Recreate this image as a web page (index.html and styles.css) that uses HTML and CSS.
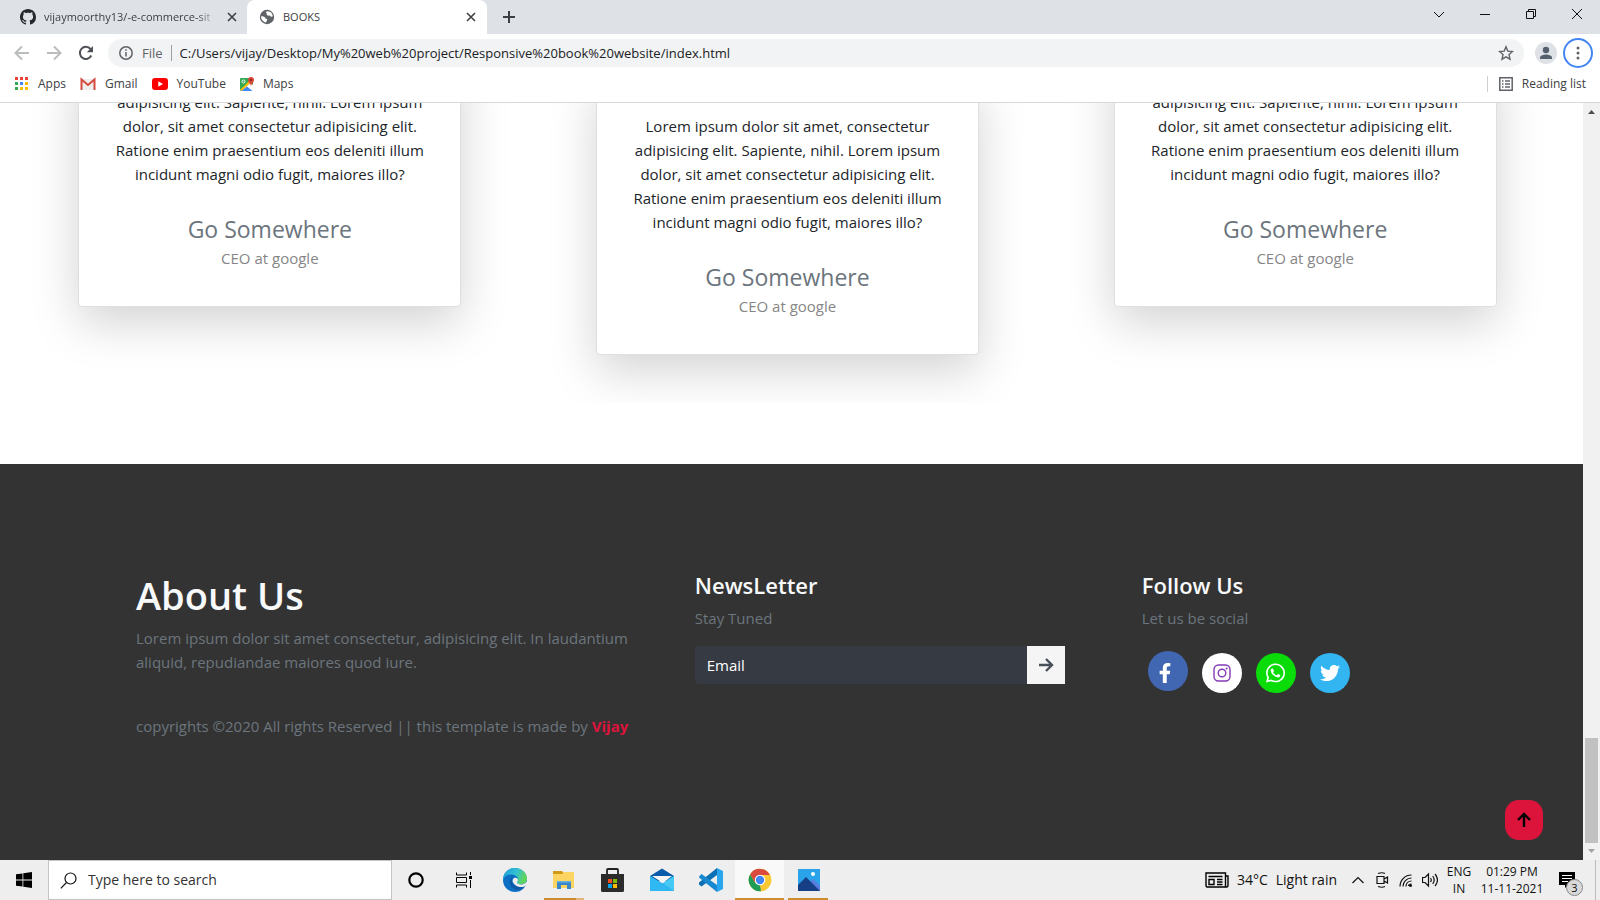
FILE: index.html
```html
<!DOCTYPE html>
<html lang="en">
<head>
<meta charset="utf-8">
<title>BOOKS</title>
<link rel="stylesheet" href="styles.css">
</head>
<body>
<div class="desktop">
  <header class="browser">
    <div class="tabstrip">
      <div class="tab">
        <svg class="favicon" viewBox="0 0 16 16"><path fill="#24292e" d="M8 0C3.58 0 0 3.58 0 8c0 3.54 2.29 6.53 5.47 7.59.4.07.55-.17.55-.38 0-.19-.01-.82-.01-1.49-2.01.37-2.53-.49-2.69-.94-.09-.23-.48-.94-.82-1.13-.28-.15-.68-.52-.01-.53.63-.01 1.08.58 1.23.82.72 1.21 1.87.87 2.33.66.07-.52.28-.87.51-1.07-1.78-.2-3.64-.89-3.64-3.95 0-.87.31-1.59.82-2.15-.08-.2-.36-1.02.08-2.12 0 0 .67-.21 2.2.82.64-.18 1.32-.27 2-.27.68 0 1.36.09 2 .27 1.53-1.04 2.2-.82 2.2-.82.44 1.1.16 1.92.08 2.12.51.56.82 1.27.82 2.15 0 3.07-1.87 3.75-3.65 3.95.29.25.54.73.54 1.48 0 1.07-.01 1.93-.01 2.2 0 .21.15.46.55.38A8.013 8.013 0 0 0 16 8c0-4.42-3.58-8-8-8z"/></svg>
        <span class="tab-title tab-title-fade">vijaymoorthy13/-e-commerce-sit</span>
        <button class="tab-close" aria-label="Close tab"><svg viewBox="0 0 10 10"><path d="M1 1l8 8M9 1l-8 8"/></svg></button>
      </div>
      <div class="tab tab-active">
        <svg class="favicon" viewBox="0 0 16 16"><circle cx="8" cy="8" r="7.200" fill="#5f6368"/><path fill="#fff" d="M8.500 2.200c-1.500.3-1.700 1.300-1 2 .8.600-.2 1.200.6 2 .8.500 2.300-.2 2.900.7.400.7 1.400.9 2.700.7.200-2.700-1.800-5.300-5.200-5.400zM2.100 7.300c1.300.2 2.900.1 3.700.9.700.700.6 1.500 1.600 1.600 1 .2 1 .8.500 1.500-.4.700-.3 1.600-.9 2.300C4.100 13 1.900 10.300 2.100 7.300z"/></svg>
        <span class="tab-title">BOOKS</span>
        <button class="tab-close" aria-label="Close tab"><svg viewBox="0 0 10 10"><path d="M1 1l8 8M9 1l-8 8"/></svg></button>
      </div>
      <button class="new-tab" aria-label="New tab"><svg viewBox="0 0 14 14"><path d="M7 1v12M1 7h12"/></svg></button>
      <div class="captions">
        <button aria-label="Search tabs"><svg viewBox="0 0 12 12"><path d="M1 4l5 5 5-5"/></svg></button>
        <button aria-label="Minimize"><svg viewBox="0 0 12 12"><path d="M1 6.500h10"/></svg></button>
        <button aria-label="Restore"><svg viewBox="0 0 12 12"><path d="M1.500 3.500h7v7h-7zM3.500 3.500v-2h7v7h-2"/></svg></button>
        <button aria-label="Close"><svg viewBox="0 0 12 12"><path d="M1 1l10 10M11 1L1 11"/></svg></button>
      </div>
    </div>
    <div class="toolbar">
      <button class="nav" aria-label="Back"><svg class="dim" viewBox="0 0 16 16"><path d="M15 8H2M8 1.500L1.500 8 8 14.500"/></svg></button>
      <button class="nav" aria-label="Forward"><svg class="dim" viewBox="0 0 16 16"><path d="M1 8h13M8 1.500L14.500 8 8 14.500"/></svg></button>
      <button class="nav" aria-label="Reload"><svg viewBox="0 0 16 16"><path d="M13.300 10.500A6 6 0 1 1 12.500 4l1.500 2"/><path class="solid" d="M15 1v6.200H8.800z"/></svg></button>
      <div class="omnibox">
        <svg class="info" viewBox="0 0 14 14"><circle cx="7" cy="7" r="6.200"/><path d="M7 6v4.500M7 3.300v1.500"/></svg>
        <span class="scheme">File</span>
        <input class="url" aria-label="Address" value="C:/Users/vijay/Desktop/My%20web%20project/Responsive%20book%20website/index.html">
        <button class="star" aria-label="Bookmark"><svg viewBox="0 0 16 16"><path d="M8 1.800l1.800 4.300 4.700.4-3.500 3.100 1 4.600L8 11.800l-4 2.400 1-4.600L1.500 6.500l4.700-.4z"/></svg></button>
      </div>
      <button class="avatar" aria-label="Profile"><svg viewBox="0 0 22 22"><circle cx="11" cy="8" r="3.200"/><path d="M5 17v-1.500c0-2 4-3 6-3s6 1 6 3V17z"/></svg></button>
      <button class="menu" aria-label="Menu"><svg viewBox="0 0 16 16"><circle cx="8" cy="3" r="1.500"/><circle cx="8" cy="8" r="1.500"/><circle cx="8" cy="13" r="1.500"/></svg></button>
    </div>
    <nav class="bookmarks">
      <a href="#apps"><svg viewBox="0 0 14 14"><path fill="#ea4335" d="M0 0h3v3H0zM5 0h3v3H5zM10 0h3v3h-3z"/><path fill="#34a853" d="M0 5h3v3H0zM0 10h3v3H0z"/><path fill="#4285f4" d="M5 5h3v3H5z"/><path fill="#fbbc04" d="M10 5h3v3h-3zM5 10h3v3H5zM10 10h3v3h-3z"/></svg>Apps</a>
      <a href="#gmail"><svg viewBox="0 0 16 14"><path fill="#eee" d="M1 2h14v11H1z"/><path fill="none" stroke="#d54b3d" stroke-width="2" d="M1.500 13V2.500L8 8l6.500-5.500V13"/></svg>Gmail</a>
      <a href="#youtube"><svg viewBox="0 0 16 14"><rect y="1" width="16" height="12" rx="3" fill="#f00"/><path fill="#fff" d="M6.300 4.300v5.400L11 7z"/></svg>YouTube</a>
      <a href="#maps"><svg viewBox="0 0 14 14"><rect y="1" width="13" height="13" rx="1" fill="#34a853"/><path fill="#fff" d="M10 6l-9 8h12V8z"/><path fill="#fbbc04" d="M0 13L11 2v3L2 14z"/><path fill="#4285f4" d="M7 9.500l5.500 4.500h-11z"/><circle cx="3.500" cy="4.500" r="1.500" fill="none" stroke="#fff"/><path fill="#db4437" d="M11 9C10.500 6.500 8 5.500 8 3a3 3 0 0 1 6 0c0 2.500-2.500 3.500-3 6z"/><circle cx="11" cy="3" r="1" fill="#7b231b"/></svg>Maps</a>
      <a class="reading" href="#reading"><svg viewBox="0 0 14 14"><path fill="none" stroke="#5f6368" stroke-width="1.500" d="M.8.800h12.400v12.400H.8zM3 4h1.500M6 4h5M3 7h1.500M6 7h5M3 10h1.500M6 10h5"/></svg>Reading list</a>
    </nav>
  </header>

  <div class="window">
    <main class="page">
      <section class="testimonials">
        <article class="card">
          <p class="quote">adipisicing elit. Sapiente, nihil. Lorem ipsum<br>dolor, sit amet consectetur adipisicing elit.<br>Ratione enim praesentium eos deleniti illum<br>incidunt magni odio fugit, maiores illo?</p>
          <h4>Go Somewhere</h4>
          <p class="role">CEO at google</p>
        </article>
        <article class="card card-low">
          <p class="quote">Lorem ipsum dolor sit amet, consectetur<br>adipisicing elit. Sapiente, nihil. Lorem ipsum<br>dolor, sit amet consectetur adipisicing elit.<br>Ratione enim praesentium eos deleniti illum<br>incidunt magni odio fugit, maiores illo?</p>
          <h4>Go Somewhere</h4>
          <p class="role">CEO at google</p>
        </article>
        <article class="card">
          <p class="quote">adipisicing elit. Sapiente, nihil. Lorem ipsum<br>dolor, sit amet consectetur adipisicing elit.<br>Ratione enim praesentium eos deleniti illum<br>incidunt magni odio fugit, maiores illo?</p>
          <h4>Go Somewhere</h4>
          <p class="role">CEO at google</p>
        </article>
      </section>
      <footer class="footer">
        <div class="col">
          <h1>About Us</h1>
          <p>Lorem ipsum dolor sit amet consectetur, adipisicing elit. In laudantium<br>aliquid, repudiandae maiores quod iure.</p>
          <p class="copyright">copyrights ©2020 All rights Reserved || this template is made by <b>Vijay</b></p>
        </div>
        <div class="col">
          <h4>NewsLetter</h4>
          <p>Stay Tuned</p>
          <form class="subscribe">
            <input type="email" placeholder="Email" aria-label="Email">
            <button type="button" aria-label="Subscribe"><svg viewBox="0 0 16 16"><path d="M1 8h13M8 2l6 6-6 6"/></svg></button>
          </form>
        </div>
        <div class="col">
          <h4>Follow Us</h4>
          <p>Let us be social</p>
          <div class="social">
            <a class="facebook" href="#facebook" aria-label="Facebook"><svg viewBox="0 0 320 512"><path d="M279.140 288l14.220-92.660h-88.910v-60.130c0-25.350 12.420-50.060 52.240-50.060h40.420V6.260S260.430 0 225.360 0c-73.220 0-121.080 44.380-121.080 124.720v70.620H22.890V288h81.390v224h100.170V288z"/></svg></a>
            <a class="instagram" href="#instagram" aria-label="Instagram"><svg viewBox="0 0 18 18"><rect x="1" y="1" width="16" height="16" rx="4.500"/><circle cx="9" cy="9" r="3.800"/><circle class="dot" cx="13.600" cy="4.400" r="1"/></svg></a>
            <a class="whatsapp" href="#whatsapp" aria-label="WhatsApp"><svg viewBox="0 32 448 448"><path d="M380.900 97.100C339 55.100 283.200 32 223.900 32c-122.400 0-222 99.600-222 222 0 39.100 10.200 77.300 29.600 111L0 480l117.700-30.900c32.400 17.700 68.900 27 106.100 27h.1c122.300 0 224.100-99.600 224.100-222 0-59.300-25.200-115-67.100-157zm-157 341.600c-33.200 0-65.700-8.900-94-25.700l-6.700-4-69.800 18.300L72 359.200l-4.400-7c-18.500-29.400-28.200-63.300-28.200-98.200 0-101.700 82.800-184.500 184.600-184.500 49.300 0 95.600 19.200 130.400 54.100 34.800 34.900 56.200 81.200 56.100 130.500 0 101.800-84.900 184.600-186.600 184.600zm101.200-138.200c-5.500-2.800-32.800-16.200-37.900-18-5.100-1.900-8.800-2.800-12.500 2.800-3.700 5.600-14.300 18-17.600 21.800-3.200 3.700-6.500 4.200-12 1.400-32.600-16.300-54-29.100-75.500-66-5.700-9.800 5.700-9.100 16.300-30.300 1.800-3.700.9-6.900-.5-9.700-1.400-2.800-12.500-30.100-17.100-41.200-4.500-10.800-9.100-9.300-12.500-9.500-3.200-.2-6.900-.2-10.600-.2-3.700 0-9.700 1.400-14.800 6.900-5.100 5.600-19.400 19-19.400 46.300 0 27.300 19.900 53.700 22.600 57.400 2.800 3.700 39.100 59.700 94.800 83.800 35.200 15.200 49 16.500 66.600 13.900 10.700-1.600 32.800-13.400 37.400-26.400 4.600-13 4.600-24.100 3.200-26.400-1.300-2.500-5-3.900-10.500-6.600z"/></svg></a>
            <a class="twitter" href="#twitter" aria-label="Twitter"><svg viewBox="0 0 512 512"><path d="M459.370 151.716c.325 4.548.325 9.097.325 13.645 0 138.720-105.583 298.558-298.558 298.558-59.452 0-114.680-17.219-161.137-47.106 8.447.974 16.568 1.299 25.340 1.299 49.055 0 94.213-16.568 130.274-44.832-46.132-.975-84.792-31.188-98.112-72.772 6.498.974 12.995 1.624 19.818 1.624 9.421 0 18.843-1.300 27.614-3.573-48.081-9.747-84.143-51.980-84.143-102.985v-1.299c13.969 7.797 30.214 12.670 47.431 13.319-28.264-18.843-46.781-51.005-46.781-87.391 0-19.492 5.197-37.360 14.294-52.954 51.655 63.675 129.300 105.258 216.365 109.807-1.624-7.797-2.599-15.918-2.599-24.040 0-57.828 46.782-104.934 104.934-104.934 30.213 0 57.502 12.670 76.670 33.137 23.715-4.548 46.456-13.320 66.599-25.340-7.798 24.366-24.366 44.833-46.132 57.827 21.117-2.273 41.584-8.122 60.426-16.243-14.292 20.791-32.161 39.308-52.628 54.253z"/></svg></a>
          </div>
        </div>
      </footer>
      <a class="to-top" href="#top" aria-label="Back to top"><svg viewBox="0 0 16 16"><path d="M8 15V2M2 8l6-6 6 6"/></svg></a>
    </main>
    <div class="scrollbar">
      <svg viewBox="0 0 17 17"><path fill="#505050" d="M5 11l3.500-4L12 11z"/></svg>
      <div class="track"><div class="thumb"></div></div>
      <svg viewBox="0 0 17 17"><path fill="#a3a3a3" d="M5 6l3.500 4L12 6z"/></svg>
    </div>
  </div>

  <footer class="taskbar">
    <button class="task" aria-label="Start"><svg class="i16" viewBox="0 0 16 16"><path d="M0 2.300L6.500 1.400v6.200H0zM7.300 1.300L16 0v7.600H7.300zM0 8.400h6.500v6.200L0 13.700zM7.300 8.400H16V16l-8.700-1.300z"/></svg></button>
    <label class="search">
      <svg viewBox="0 0 17 17"><circle cx="10.500" cy="6.500" r="5.500"/><path d="M6.500 10.500L.8 16.300"/></svg>
      <input type="text" placeholder="Type here to search" aria-label="Search">
    </label>
    <button class="task" aria-label="Cortana"><svg class="i16" viewBox="0 0 16 16"><circle cx="8" cy="8" r="6.700" fill="none" stroke="#000" stroke-width="2.200"/></svg></button>
    <button class="task" aria-label="Task view"><svg class="i16" viewBox="0 0 16 16"><path fill="none" stroke="#000" d="M.5.500V3h10V.500M.5 5.500h10v5H.5zM.5 15.500V13h10v2.500M14.500 0v3M14.500 8v8"/><path d="M13 4h3v3h-3z"/></svg></button>
    <button class="task app edge" aria-label="Edge"><svg class="i24" viewBox="0 0 24 24"><defs><linearGradient id="edgeTop" x1="0" x2="1" y1="0" y2=".3"><stop offset="0" stop-color="#1c9de0"/><stop offset=".6" stop-color="#35c1d0"/><stop offset="1" stop-color="#5fd65a"/></linearGradient></defs><circle cx="12" cy="12" r="12" fill="#0d6fc4"/><path fill="url(#edgeTop)" d="M0 12C0 5 5.500 0 12 0s12 5 12 10.500c0 4-3 5.700-6 5.700-3 0-4.200-1-4-2 .8-1 1-1.500 1-2.500C15 8 11 6.500 8 6.500 4 6.500 1 9 0 12z"/><path fill="#0d59a4" d="M9 9c-2 2-3 5-1.500 8 1.300 3 4.500 5 8 4.600 2.500-.3 5-1.600 6.400-3.600-5 2-11.400.5-12.900-3.500-.6-2 0-4 0-5.500z"/><path fill="#eee" d="M11 10c2-1 4 .2 4 2 0 1-1 1.700-1 2.500 0 1 2 1.900 4.200 1.900 2.500 0 4.600-1.200 5.600-3.400L24 16l-2 2.200c-3 1.500-6.900 1.200-9.700-1.200C9 14.500 9 11.500 11 10z"/></svg></button>
    <button class="task app explorer" aria-label="File Explorer"><svg class="i24" viewBox="0 0 24 24"><path fill="#d39a14" d="M1 3h9l1.500 2H22v4H1z"/><path fill="#fcd462" d="M1 6h9.500l1-2H22v16H1z"/><path fill="#3a87c8" d="M5 13h14v8h-4v-4H9v4H5z"/><path fill="#64b1e8" d="M5 13h14v1.500H5z"/></svg></button>
    <button class="task app" aria-label="Store"><svg class="i24" viewBox="0 0 24 24"><path fill="none" stroke="#222" stroke-width="1.800" d="M6 7V2q0-1 1-1h9q1 0 1 1v5"/><path fill="#2b2b2b" d="M0 6h23v16.500q0 1.500-1.500 1.500h-20Q0 24 0 22.500z"/><path fill="#f25022" d="M7 11h4v4H7z"/><path fill="#7fba00" d="M12 11h4v4h-4z"/><path fill="#00a4ef" d="M7 16h4v4H7z"/><path fill="#ffb900" d="M12 16h4v4h-4z"/></svg></button>
    <button class="task app" aria-label="Mail"><svg class="i24" viewBox="0 0 24 24"><path fill="#0a5cab" d="M0 8l12-7.500L24 8v5H0z"/><path fill="#f4f4f4" d="M2 8h20l-9 7z"/><path fill="#1792dd" d="M0 8l12.500 7.500L24 8v15H0z"/><path fill="#2fb8f2" d="M0 8l24 15H0z"/><path fill="#47c9f6" d="M24 8v15L12.500 15.500z"/></svg></button>
    <button class="task app" aria-label="Visual Studio Code"><svg class="i24" viewBox="0 0 24 24"><path fill="#0b6fb4" d="M18 0v7L2.500 18.500 0 16.500v-2z"/><path fill="#1688d0" d="M0 8.500L2.500 6 18 17v7L0 9.500z"/><path fill="#29a6ee" d="M18 0l6 3v18l-6 3z"/></svg></button>
    <button class="task app active" aria-label="Chrome"><svg class="i24" viewBox="0 0 24 24"><circle cx="12" cy="12" r="11.300" fill="#fbc934"/><path fill="#1f9d57" d="M2.200 6.300L7.200 15 12 17.500l1 5.700A11.300 11.300 0 0 1 2.200 6.300z"/><path fill="#fbc934" d="M16.700 15L12.500 23.300A11.300 11.300 0 0 0 22 7H12z"/><path fill="#d94b3f" d="M2.200 6.300A11.300 11.300 0 0 1 21.900 7H12L7 14.500z"/><circle cx="12" cy="12" r="5.200" fill="#fff"/><circle cx="12" cy="12" r="4.200" fill="#4285f4"/></svg></button>
    <button class="task app photos" aria-label="Photos"><svg class="i24" viewBox="0 0 24 24"><path fill="#2ba3ea" d="M1 1h22v22H1z"/><path fill="#5a7ee0" d="M12 15l4-4 7 7v5H12z"/><path fill="#173f86" d="M1 17l8-8 14 14H1z"/><circle cx="16" cy="6" r="2" fill="#fff"/></svg></button>
    <div class="tray">
      <a class="weather" href="#weather"><svg viewBox="0 0 24 16"><path d="M1 1h19.500v14H2q-1-.3-1-1.500zM20.500 4H23v9.500q0 1.500-1.500 1.500h-2M3.500 4.500h14M12 7.500h5.500M12 10h5.500M12 12.500h5.500M4 7.500h5v5H4z"/></svg><span>34°C</span><span>Light rain</span></a>
      <button class="tray-icon" aria-label="Hidden icons"><svg viewBox="0 0 16 16"><path d="M2.500 11L8 5.500l5.500 5.500"/></svg></button>
      <button class="tray-icon" aria-label="Meet Now"><svg viewBox="0 0 16 16"><path d="M3 4.500h7v7H3zM10 7l3.500-2v6L10 9M4 1.500q4-1.500 7 0M4 14.500q4 1.500 7 0"/></svg></button>
      <button class="tray-icon" aria-label="Network"><svg viewBox="0 0 16 16"><path d="M2 14.500C2 8 7 3 13.500 3M5 14.500c0-5 4-8.500 8.500-8.500M8 14.500C8 11 10.500 9 13.500 9M10.500 14c0-1 1-2 3-2"/><circle class="ink" cx="12.500" cy="13.500" r="1.500"/></svg></button>
      <button class="tray-icon" aria-label="Volume"><svg viewBox="0 0 16 16"><path d="M.5 5.500h2.500l3.500-3.500v12L3 10.500H.5zM8.500 6q1.500 2 0 4M10.700 4q3 4 0 8M13 2q5 6 0 12"/></svg></button>
      <div class="stack lang"><span>ENG</span><span>IN</span></div>
      <div class="stack clock"><span>01:29 PM</span><span>11-11-2021</span></div>
      <button class="notify" aria-label="Notifications"><svg viewBox="0 0 16 16"><path fill="#000" d="M0 0h16v13h-7l-3 3v-3H0z"/><path stroke="#fff" d="M3 3.500h10M3 6.500h10M3 9.500h6"/></svg><span class="badge">3</span></button>
      <div class="peek"></div>
    </div>
  </footer>
</div>
</body>
</html>
```

FILE: styles.css
```css
* { box-sizing: border-box; }
body {
  margin: 0;
  font-family: "Open Sans", "Noto Sans", sans-serif;
  font-size: 15px;
  line-height: 24px;
  color: #212529;
}
button { border: 0; padding: 0; background: none; font: inherit; color: inherit; display: flex; align-items: center; justify-content: center; }
input { border: 0; padding: 0; background: none; font: inherit; color: inherit; outline: 0; min-width: 0; }
a { color: inherit; text-decoration: none; }
h1, h4, p { margin: 0; font-weight: 400; }
svg { display: block; flex: none; }

.desktop { height: 100vh; display: flex; flex-direction: column; overflow: hidden; }

/* Browser chrome */
.browser { flex: none; font-size: 12px; line-height: 16px; color: #3c4043; border-bottom: 1px solid #d6d8da; background: #fff; }
.tabstrip { height: 34px; display: flex; align-items: center; background: #dee1e6; }
.tab { width: 247px; height: 34px; padding: 0 8px 0 20px; display: flex; align-items: center; gap: 8px; font-size: 11px; }
.tab-active { width: 240px; padding: 0 9px 0 12px; background: #fff; border-radius: 8px 8px 0 0; }
.favicon { width: 16px; height: 16px; }
.tab-title { flex: 1; min-width: 0; overflow: hidden; white-space: nowrap; }
.tab-title-fade { -webkit-mask-image: linear-gradient(90deg, #000 88%, transparent); mask-image: linear-gradient(90deg, #000 88%, transparent); }
.tab-close { width: 14px; height: 14px; }
.tab-close svg { width: 10px; height: 10px; fill: none; stroke: #3c4043; stroke-width: 1.6; }
.new-tab { width: 43px; height: 34px; }
.new-tab svg { width: 14px; height: 14px; stroke: #3c4043; stroke-width: 2; }
.captions { margin-left: auto; display: flex; height: 28px; align-self: flex-start; }
.captions button { width: 46px; }
.captions svg { width: 12px; height: 12px; fill: none; stroke: #111; }

.toolbar { height: 36px; display: flex; align-items: center; padding: 1px 7px 0 6px; }
.nav { width: 32px; height: 32px; }
.nav svg { width: 16px; height: 16px; fill: none; stroke: #4e5256; stroke-width: 2; }
.nav svg.dim { stroke: #babcbe; }
.nav svg .solid { fill: #4e5256; stroke: none; }
.omnibox { flex: 1; height: 28px; margin-left: 6px; padding: 0 10px; border-radius: 14px; background: #f1f3f4; display: flex; align-items: center; font-size: 13px; line-height: 18px; }
.info { width: 14px; height: 14px; margin: 0 9px 0 1px; fill: none; stroke: #5f6368; stroke-width: 1.5; }
.scheme { color: #5f6368; padding-right: 8px; border-right: 1px solid #9aa0a6; line-height: 16px; }
.url { flex: 1; margin-left: 8px; color: #202124; }
.star svg { width: 16px; height: 16px; fill: none; stroke: #5f6368; stroke-width: 1.4; }
.avatar { width: 22px; height: 22px; margin-left: 11px; border-radius: 50%; background: #dee1e6; }
.avatar svg { width: 22px; fill: #55606f; }
.menu { width: 30px; height: 30px; margin-left: 6px; border: 2px solid #4285f4; border-radius: 50%; }
.menu svg { width: 16px; height: 16px; fill: #5f6368; }

.bookmarks { height: 32px; padding: 0 14px 4px 15px; display: flex; align-items: center; gap: 14px; }
.bookmarks a { display: flex; align-items: center; gap: 9px; }
.bookmarks svg { height: 14px; }
.bookmarks .reading { margin-left: auto; padding-left: 11px; border-left: 1px solid #cdcfd2; }

/* Page, scrolled to its end */
.window { flex: 1; min-height: 0; display: flex; }
.page { position: relative; flex: 1; min-width: 0; overflow: hidden; display: flex; flex-direction: column; justify-content: flex-end; background: #fff; }
.testimonials { flex: none; display: grid; grid-template-columns: repeat(3, 1fr); align-items: end; justify-items: center; padding: 48px 19px 48px 11px; margin-bottom: 61px; overflow: hidden; }
.card { width: 74%; padding: 36px 16px; margin-bottom: 48px; text-align: center; white-space: nowrap; background: #fff; border: 1px solid #dfdfdf; border-radius: 4px; box-shadow: 0 16px 48px rgba(0, 0, 0, .175); }
.card-low { margin-bottom: 0; }
.card h4 { margin-top: 26px; font-size: 23px; line-height: 34px; color: #6c757d; }
.role { color: #868686; }

.footer { flex: none; display: grid; grid-template-columns: 5fr 4fr 3fr; padding: 107px 121px 122px; background: #333; color: #6c757d; }
.col { padding: 0 15px; }
.footer h1 { font-size: 38px; line-height: 48px; font-weight: 600; color: #f8f9fa; margin-bottom: 7px; }
.footer h4 { font-size: 22px; line-height: 28px; font-weight: 600; color: #f8f9fa; margin-bottom: 7px; }
.footer p { white-space: nowrap; }
.copyright { margin-top: 40px; }
.copyright b { color: crimson; }
.subscribe { margin-top: 16px; display: flex; width: 370px; max-width: 100%; }
.subscribe input { flex: 1; height: 38px; padding: 0 12px; color: #fff; background: #353a43; border-radius: 4px 0 0 4px; }
.subscribe input::placeholder { color: #fff; opacity: 1; }
.subscribe button { width: 38px; height: 38px; background: #f5f5f5; }
.subscribe svg { width: 16px; height: 16px; fill: none; stroke: #495057; stroke-width: 2.4; }
.social { display: flex; align-items: flex-end; gap: 14px; padding: 21px 5px 0 6px; }
.social a { width: 40px; height: 40px; border-radius: 50%; display: flex; align-items: center; justify-content: center; }
.social svg { fill: #fff; width: 20px; height: 20px; }
.social .facebook { background: #4267b2; margin-bottom: 2px; padding: 3px 6px 0 0; }
.social .instagram { background: #fff; }
.social .instagram svg { width: 18px; fill: none; stroke: #833ab4; stroke-width: 1.4; }
.social .instagram .dot { fill: #833ab4; stroke: none; }
.social .whatsapp { background: #0adc0a; }
.social .whatsapp svg { width: 19px; }
.social .twitter { background: #33b5f2; }
.to-top { position: absolute; right: 40px; bottom: 20px; width: 38px; height: 40px; border-radius: 14px; background: crimson; display: flex; align-items: center; justify-content: center; }
.to-top svg { width: 16px; height: 16px; fill: none; stroke: #000; stroke-width: 2.4; }

.scrollbar { width: 17px; flex: none; background: #f1f1f1; display: flex; flex-direction: column; }
.scrollbar svg { width: 17px; height: 17px; }
.track { flex: 1; padding: 0 2px; display: flex; align-items: flex-end; }
.thumb { width: 100%; height: 105px; background: #c1c1c1; }

/* Taskbar */
.taskbar { flex: none; height: 40px; display: flex; background: #eee; color: #111; }
.task { width: 48px; height: 40px; }
.app { width: 49px; }
.i16 { width: 16px; height: 16px; }
.i24 { width: 24px; height: 24px; }
.search { width: 344px; border: 1px solid #c4c4c4; background: #fff; display: flex; align-items: center; padding: 0 11px; gap: 11px; font-size: 14px; }
.search svg { width: 17px; height: 17px; fill: none; stroke: #111; stroke-width: 1.2; }
.search input { flex: 1; color: #333; }
.search input::placeholder { color: #333; opacity: 1; }
.edge { margin-left: 2px; }
.explorer { background: linear-gradient(90deg, transparent 5px, #cf8c2c 5px 37px, #e1b577 37px 45px, transparent 45px) bottom / 100% 2px no-repeat; }
.active { background: linear-gradient(#cf8c2c, #cf8c2c) bottom / 100% 2px no-repeat #f9f9f9; }
.photos { background: linear-gradient(90deg, transparent 4px, #cf8c2c 4px 44px, transparent 44px) bottom / 100% 2px no-repeat; }
.tray { margin-left: auto; display: flex; align-items: center; font-size: 14px; }
.weather { display: flex; align-items: center; gap: 8px; margin-right: 9px; white-space: nowrap; }
.weather svg { width: 24px; height: 16px; fill: none; stroke: #000; stroke-width: 1.4; }
.tray-icon { width: 24px; height: 40px; }
.tray-icon svg { width: 16px; height: 16px; fill: none; stroke: #111; stroke-width: 1.2; }
.tray-icon .ink { fill: #111; stroke: none; }
.stack { display: flex; flex-direction: column; align-items: center; font-size: 12px; line-height: 17px; }
.lang { width: 34px; }
.clock { width: 72px; }
.notify { position: relative; width: 38px; height: 40px; }
.notify svg { width: 16px; height: 16px; }
.badge { position: absolute; left: 18px; top: 19px; width: 17px; height: 17px; border: 1px solid #888; border-radius: 50%; background: #d9d9d9; font-size: 11px; line-height: 15px; text-align: center; }
.peek { width: 5px; height: 40px; margin-left: 9px; border-left: 1px solid #bbb; }
```
